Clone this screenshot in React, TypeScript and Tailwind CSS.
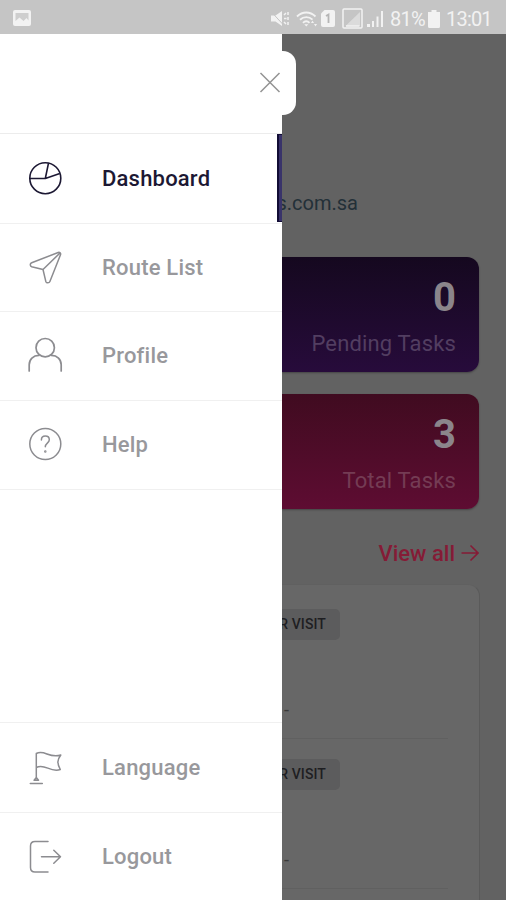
import React from 'react';

type IconProps = { className?: string };

const DashboardIcon: React.FC<IconProps> = ({ className }) => (
  <svg viewBox="0 0 36 36" className={className} fill="none" stroke="currentColor" strokeWidth="1.6" strokeLinejoin="round">
    <circle cx="18.3" cy="17.2" r="15.5" />
    <path d="M2.800 17.500H18.300L21.500 2.200M18.300 17.500l14.500-5" />
  </svg>
);

const RouteIcon: React.FC<IconProps> = ({ className }) => (
  <svg viewBox="0 0 36 36" className={className} fill="none" stroke="currentColor" strokeWidth="1.5" strokeLinejoin="round" strokeLinecap="round">
    <path d="M31.200 2.500 4.700 12.700c-1.900.8-1.900 3.400 0 4l11.300 2.800L18.800 31.400c.6 1.900 3.400 1.900 4.100.1L33.500 4.800c.6-1.600-.8-2.800-2.300-2.300ZM16 19.500 33 3" />
  </svg>
);

const ProfileIcon: React.FC<IconProps> = ({ className }) => (
  <svg viewBox="0 0 36 36" className={className} fill="none" stroke="currentColor" strokeWidth="1.7" strokeLinecap="round">
    <circle cx="18.200" cy="10.700" r="9.200" />
    <path d="M2.200 34v-6.200c0-5.500 4-9.400 9.700-9.400M34.200 34v-6.200c0-5.500-4-9.400-9.700-9.400" />
  </svg>
);

const HelpIcon: React.FC<IconProps> = ({ className }) => (
  <svg viewBox="0 0 36 36" className={className} fill="none" stroke="currentColor" strokeWidth="1.5" strokeLinecap="round">
    <circle cx="18.300" cy="18" r="15.500" />
    <path d="M14.400 13.900c0-2.300 1.600-3.800 3.900-3.800s4 1.500 4 3.700c0 3.200-4 3.500-4 7" />
    <circle cx="18.300" cy="25.500" r=".5" />
  </svg>
);

const LanguageIcon: React.FC<IconProps> = ({ className }) => (
  <svg viewBox="0 0 36 36" className={className} fill="none" stroke="currentColor" strokeWidth="1.5" strokeLinecap="round" strokeLinejoin="round">
    <path d="M9.300 28.500V3.500c8-4.500 13 5.500 24.500 1.500-3.800 5-3.800 8.500-.5 14.500C23 23 18 13 9.300 17.500M9.300 27.500l-2.200 2.700h4.400l-2.200-2.700ZM3.300 33.500h12" />
  </svg>
);

const LogoutIcon: React.FC<IconProps> = ({ className }) => (
  <svg viewBox="0 0 36 36" className={className} fill="none" stroke="currentColor" strokeWidth="1.5" strokeLinecap="round" strokeLinejoin="round">
    <path d="M21 2.500H8C5.200 2.500 3.500 4.200 3.500 7v21.500c0 2.800 1.700 4.500 4.500 4.500h13M14.500 17.700h19M26.800 11.200l6.700 6.500-6.700 6.500" />
  </svg>
);

const StatusBar: React.FC = () => (
  <header className="flex h-[34px] shrink-0 items-center justify-between bg-[#c5c5c5] pt-[3px] pr-[14px] pl-[13px] text-[#f2f2f2]">
    <svg viewBox="0 0 18 16" className="mt-[-1px] h-4 w-[18px]">
      <rect width="18" height="16" rx="2" fill="currentColor" />
      <path d="M2.500 3h13v7.500l-2-2.500-3 3-4-3.500-4 3.500Z" fill="#cecece" />
    </svg>
    <div className="flex items-center">
      <svg viewBox="0 0 20 18" className="h-[18px] w-5" fill="currentColor">
        <path d="M1 5.500h4.500L12 1v15l-6.500-4.500H1Z" />
        <path d="M14 5l2-2M14 8.500h2.500M14 12l2 2M18 2v3M18 7v3M18 12v3" fill="none" stroke="currentColor" strokeWidth="1.500" />
        <path d="m1.500 2 12 13" fill="none" stroke="#c5c5c5" strokeWidth="1" />
      </svg>
      <svg viewBox="0 0 22 18" className="ml-[6px] h-[18px] w-[22px]" fill="none" stroke="currentColor" strokeWidth="1.900">
        <path d="M1 6.500c5.500-5.300 13-5.300 18.500 0M4 9.700c3.700-3.500 9-3.500 12.500 0M7 12.800c2-2 4.500-2 6.500 0" />
        <path d="m8.300 14.200 2 2.300 2-2.300ZM15 13l1.500-2.500L18 13ZM18 14l1.500 2.500L21 14Z" fill="currentColor" stroke="none" />
      </svg>
      <svg viewBox="0 0 14 17" className="ml-[3px] h-[17px] w-[14px]">
        <path d="M3.500 0H12a2 2 0 0 1 2 2v13a2 2 0 0 1-2 2H2a2 2 0 0 1-2-2V3.500Z" fill="currentColor" />
        <path d="m5 6 2.500-1.500v8.500" fill="none" stroke="#b5b5b5" strokeWidth="1.800" />
      </svg>
      <svg viewBox="0 0 21 21" className="ml-[7px] size-[21px]">
        <rect x="1" y="1" width="19" height="19" rx="1" fill="none" stroke="currentColor" strokeWidth="1.500" />
        <path d="M3.500 18 18 4v14Z" fill="currentColor" opacity=".5" />
        <path d="M4 18h13.500" stroke="currentColor" strokeWidth="1.500" />
      </svg>
      <svg viewBox="0 0 17 17" className="ml-1 h-[17px] w-[17px]" fill="currentColor">
        <path d="M0 14h3v3H0ZM5 11h2v6H5ZM9.500 6.500h2V17h-2ZM14 1h2v16h-2Z" />
      </svg>
      <span className="ml-[6px] w-[35px] text-[20px] leading-6 whitespace-nowrap tracking-[-0.7px]">81%</span>
      <svg viewBox="0 0 12 18" className="ml-[3px] h-[18px] w-3" fill="currentColor">
        <path d="M3.500 0h5v2H12v14.500q0 1.500-1.500 1.500h-9Q0 18 0 16.500V2h3.500Z" />
      </svg>
      <span className="ml-[6px] w-[46px] text-[20px] leading-6 whitespace-nowrap tracking-[-0.8px]">13:01</span>
    </div>
  </header>
);

type MenuItemProps = {
  icon: React.FC<IconProps>;
  label: string;
  active?: boolean;
  className: string;
};

const MenuItem: React.FC<MenuItemProps> = ({ icon: Icon, label, active, className }) => (
  <a
    href="#"
    className={`flex shrink-0 items-center border-[#f0f0f0] pl-[27px] text-[22px] font-medium tracking-[0.2px] ${active ? 'text-[#1c1833]' : 'text-[#98989c]'} ${className}`}
  >
    <Icon className={active ? 'size-9' : 'size-9 text-[#8c8c90]'} />
    <span className="ml-[39px] flex-1">{label}</span>
    {active && <span className="h-[88px] w-[5px] self-start border-y border-l-2 border-[#120d35] bg-[#39336a]" />}
  </a>
);

const Drawer: React.FC = () => (
  <nav className="relative z-10 flex w-[282px] shrink-0 flex-col bg-white">
    <div className="h-[100px] shrink-0 border-b border-[#ececec]" />
    <button
      type="button"
      aria-label="Close menu"
      className="absolute top-[17px] right-[-14px] flex h-[64px] w-[38px] items-center rounded-r-[13px] bg-white text-[#929292]"
    >
      <svg viewBox="0 0 22 22" className="ml-[1px] size-[22px]" stroke="currentColor" strokeWidth="1.500">
        <path d="m1.500 1 19 19M20.500 1l-19 19" />
      </svg>
    </button>
    <MenuItem icon={DashboardIcon} label="Dashboard" active className="h-[90px] border-b" />
    <MenuItem icon={RouteIcon} label="Route List" className="h-[88px] border-b" />
    <MenuItem icon={ProfileIcon} label="Profile" className="h-[89px] border-b pb-[2px]" />
    <MenuItem icon={HelpIcon} label="Help" className="h-[89px] border-b pb-[2px]" />
    <div className="flex-1" />
    <MenuItem icon={LanguageIcon} label="Language" className="h-[90px] border-t" />
    <MenuItem icon={LogoutIcon} label="Logout" className="h-[88px] border-t" />
  </nav>
);

type TaskCardProps = { count: number; label: string; className: string };

const TaskCard: React.FC<TaskCardProps> = ({ count, label, className }) => (
  <div className={`mr-[27px] flex h-[115px] flex-col items-end rounded-r-[12px] bg-linear-to-b pt-[17px] pr-[23px] shadow-[0_1px_2px_rgba(0,0,0,0.3)] ${className}`}>
    <span className="text-[40px] leading-[48px] font-bold text-[#8b858b]">{count}</span>
    <span className="mt-[9px] text-[22px] leading-[26px] tracking-[0.15px] whitespace-nowrap">{label}</span>
  </div>
);

const Visit: React.FC = () => (
  <div className="mr-[31px] flex h-[130px] shrink-0 flex-col items-start border-b border-[#606060]">
    <span className="flex h-[31px] w-[58px] shrink-0 items-center justify-end rounded-r-[5px] bg-[#5c5c5d] pr-[14px] text-[14px] font-medium tracking-[0.1px] whitespace-nowrap text-[#1e1e22]">
      R VISIT
    </span>
    <span className="mt-[58px] ml-[2px] text-[18px] leading-6 text-[#3a3a3a]">-</span>
  </div>
);

const Page: React.FC = () => (
  <main className="flex flex-1 flex-col overflow-hidden bg-[#626262]">
    <div className="mt-[157px] flex h-6 w-[76px] justify-end text-[20px] leading-6 whitespace-nowrap text-[#233038]">s.com.sa</div>
    <div className="mt-[42px] flex flex-col gap-[22px]">
      <TaskCard count={0} label="Pending Tasks" className="from-[#15081f] to-[#270b3b] text-[#523e61]" />
      <TaskCard count={3} label="Total Tasks" className="from-[#400b20] to-[#5e0c32] text-[#743c54]" />
    </div>
    <a href="#" className="mt-[31px] mr-[27px] flex h-[26px] items-center justify-end text-[22px] font-medium text-[#851b36]">
      View all
      <svg viewBox="0 0 18 18" className="ml-[6px] size-[18px]" fill="none" stroke="currentColor" strokeWidth="1.600">
        <path d="M.5 9H17M9.500 1.500 17 9l-7.500 7.500" />
      </svg>
    </a>
    <section className="mt-[18px] mr-[26px] flex flex-1 flex-col gap-[20px] overflow-hidden rounded-tr-[12px] border-t border-r border-t-[#606060] border-r-[#5a5a5a] bg-[#676767] pt-[24px]">
      <Visit />
      <Visit />
    </section>
  </main>
);

const App: React.FC = () => (
  <div className="flex h-[900px] w-[506px] flex-col overflow-hidden font-['Roboto',sans-serif]">
    <StatusBar />
    <div className="flex min-h-0 flex-1">
      <Drawer />
      <Page />
    </div>
  </div>
);

export default App;
